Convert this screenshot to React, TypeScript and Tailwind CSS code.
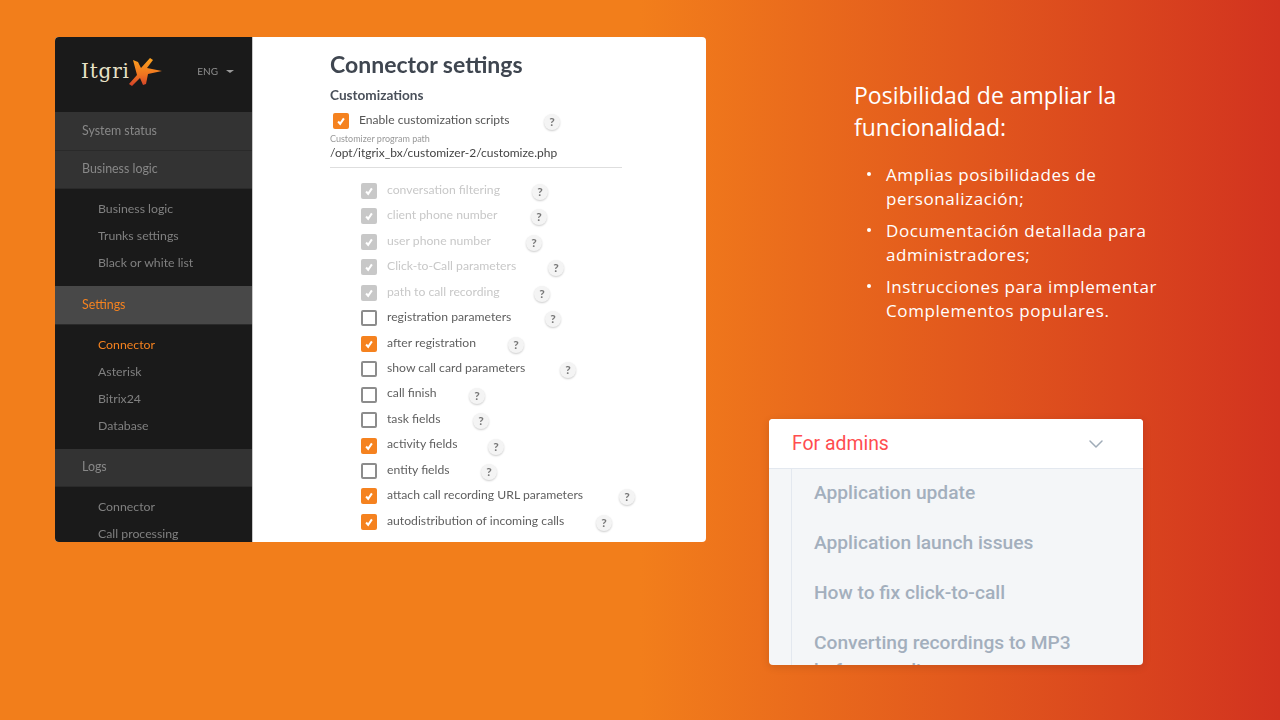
import { ChevronDown } from "lucide-react"

const topRows = [
    { label: "conversation filtering", state: "disabled", help: "w-[145px]" },
    { label: "client phone number", state: "disabled", help: "w-[144px]" },
    { label: "user phone number", state: "disabled", help: "w-[139px]" },
    { label: "Click-to-Call parameters", state: "disabled", help: "w-[161px]" },
    { label: "path to call recording", state: "disabled", help: "w-[147px]" },
    { label: "registration parameters", state: "off", help: "w-[158px]" },
    { label: "after registration", state: "on", help: "w-[121px]" },
    { label: "show call card parameters", state: "off", help: "w-[173px]" },
    { label: "call finish", state: "off", help: "w-[82px]" },
    { label: "task fields", state: "off", help: "w-[86px]" },
    { label: "activity fields", state: "on", help: "w-[101px]" },
    { label: "entity fields", state: "off", help: "w-[94px]" },
    { label: "attach call recording URL parameters", state: "on", help: "w-[232px]" },
    { label: "autodistribution of incoming calls", state: "on", help: "w-[209px]" },
]

const bullets = [
    ["Amplias posibilidades de", "personalización;"],
    ["Documentación detallada para", "administradores;"],
    ["Instrucciones para implementar", "Complementos populares."],
]

function Check({ state }: { state: string }) {
    if (state === "off") {
        return <span className="block w-4 h-4 rounded-[2px] border-2 border-[#8c8c8c] bg-white shrink-0" />
    }
    return (
        <span className={`flex items-center justify-center w-4 h-4 rounded-[2px] shrink-0 ${state === "on" ? "bg-[#f5821f]" : "bg-[#c8c8c8]"}`}>
            <svg width="12" height="12" viewBox="0 0 10 10" fill="none">
                <path d="M2.6 5.4 L4.3 7.4 L7.4 2.8" stroke="white" strokeWidth="1.7" />
            </svg>
        </span>
    )
}

function Help() {
    return (
        <span className="flex items-center justify-center w-4 h-4 rounded-full bg-[#f4f4f4] shadow-[0_1px_2px_rgba(0,0,0,0.2)] text-[12px] font-bold text-[#777] shrink-0 mt-[2px]">
            ?
        </span>
    )
}

function SideHead({ label, active }: { label: string; active?: boolean }) {
    return (
        <div className={`flex items-center h-[38.5px] pl-[27px] pt-[1px] text-[12.4px] border-b border-[#2a2a2a] ${active ? "bg-[#484848] text-[#f5821f]" : "bg-[#333333] text-[#888888]"}`}>
            {label}
        </div>
    )
}

function SideGroup({ items, active }: { items: string[]; active?: string }) {
    return (
        <div className="flex flex-col pt-[6.5px] pb-[9.5px]">
            {items.map((item) => (
                <div key={item} className={`flex items-center h-[27px] pl-[43px] pt-[1px] text-[12.3px] ${item === active ? "text-[#f5821f]" : "text-[#808080]"}`}>
                    {item}
                </div>
            ))}
        </div>
    )
}

function Logo() {
    return (
        <div className="h-[75px] flex items-center justify-between pl-[26px] pr-[18px] pb-[7px]">
            <div className="flex items-center">
                <span className="font-['DejaVu_Serif',serif] text-[20px] tracking-[0.8px] text-[#e8e2c8]">Itgri</span>
                <svg width="36" height="31" viewBox="0 0 36 31" className="-ml-[2px]">
                    <defs>
                        <linearGradient id="logoStar" x1="0" y1="0" x2="0" y2="1">
                            <stop offset="0" stopColor="#fba21f" />
                            <stop offset="0.6" stopColor="#ef7420" />
                            <stop offset="1" stopColor="#d2402a" />
                        </linearGradient>
                    </defs>
                    <path d="M5 4 L10 6 L13 12 L22 2 L25 4 L19 12 L34 15 L20 18 L18 28 L15 29 L12 22 L4 30 L1 28 L9 19 Z" fill="url(#logoStar)" />
                </svg>
            </div>
            <div className="flex items-center gap-2 text-[10px] text-[#8f8f8f]">
                ENG
                <span className="w-0 h-0 border-x-4 border-x-transparent border-t-[3px] border-t-[#9a9a9a]" />
            </div>
        </div>
    )
}

export default function App() {
    return (
        <div className="w-[1280px] h-[720px] overflow-hidden flex bg-[linear-gradient(90deg,#f27e1b_0%,#f27e1b_50%,#d2331f_100%)] font-['Lato',sans-serif]">
            <div className="w-[769px] pl-[55px] pt-[37px] shrink-0">
                <div className="flex w-[651px] h-[505px] rounded-[4px] overflow-hidden bg-white">
                    <aside className="w-[197px] bg-[#1a1a1a] shrink-0 blur-[0.3px]">
                        <Logo />
                        <SideHead label="System status" />
                        <SideHead label="Business logic" />
                        <SideGroup items={["Business logic", "Trunks settings", "Black or white list"]} />
                        <SideHead label="Settings" active />
                        <SideGroup items={["Connector", "Asterisk", "Bitrix24", "Database"]} active="Connector" />
                        <SideHead label="Logs" />
                        <SideGroup items={["Connector", "Call processing"]} />
                    </aside>
                    <main className="pl-[77px] pt-[12px] flex-1 text-[#555] border-l border-[#c8c8c8] blur-[0.3px]">
                        <h1 className="text-[23px] leading-[30px] font-bold text-[#3f4650]">Connector settings</h1>
                        <div className="mt-[7px] text-[13.6px] leading-[18px] font-bold text-[#4a505a]">Customizations</div>
                        <div className="flex items-center h-[20px] mt-[7px] pl-[3px] text-[12.1px]">
                            <Check state="on" />
                            <span className="ml-[10px] w-[185px] -mt-[2px]">Enable customization scripts</span>
                            <Help />
                        </div>
                        <div className="mt-[3px] text-[9px] leading-[10px] text-[#999]">Customizer program path</div>
                        <div className="text-[12px] leading-[17px] text-[#444]">/opt/itgrix_bx/customizer-2/customize.php</div>
                        <div className="w-[292px] mt-[6px] mb-[15px] border-t border-[#dedede]" />
                        <div className="flex flex-col gap-[9.46px] pl-[31px]">
                            {topRows.map((row) => (
                                <div key={row.label} className="flex items-center h-4 text-[12.2px]">
                                    <Check state={row.state} />
                                    <span className={`ml-[10px] -mt-[2px] whitespace-nowrap ${row.help} ${row.state === "disabled" ? "text-[#c8c8c8]" : "text-[#5f5f5f]"}`}>
                                        {row.label}
                                    </span>
                                    <Help />
                                </div>
                            ))}
                        </div>
                    </main>
                </div>
            </div>
            <div className="flex-1 flex flex-col">
                <div className="pl-[85px] pt-[79px] h-[419px] text-white font-['Open_Sans',sans-serif]">
                    <h2 className="text-[23px] leading-[32px]">Posibilidad de ampliar la<br />funcionalidad:</h2>
                    <ul className="mt-[20px] flex flex-col gap-[8px] text-[17px] leading-[24px] tracking-[0.6px]">
                        {bullets.map((lines) => (
                            <li key={lines[0]} className="flex">
                                <span className="w-[32px] pl-[13px] pt-[9px]">
                                    <span className="block w-[4px] h-[4px] rounded-full bg-white" />
                                </span>
                                <span>{lines[0]}<br />{lines[1]}</span>
                            </li>
                        ))}
                    </ul>
                </div>
                <div className="w-[374px] h-[246px] rounded-[4px] overflow-hidden bg-[#f4f6f8] shadow-[0_2px_8px_rgba(0,0,0,0.12)] font-['Roboto',sans-serif]">
                    <div className="flex items-center justify-between h-[50px] pl-[23px] pr-[35px] bg-white border-b border-[#e3e8ef]">
                        <span className="text-[19.4px] text-[#ff4d4f]">For admins</span>
                        <ChevronDown className="w-6 h-6 text-[#a0acb8]" strokeWidth={1.5} />
                    </div>
                    <div className="ml-[22px] pl-[22px] pr-[30px] pt-[10px] h-[196px] border-l border-[#e3e8ef] overflow-hidden text-[19.2px] leading-[28px] font-medium text-[#a3afbd] flex flex-col gap-[22px]">
                        <div>Application update</div>
                        <div>Application launch issues</div>
                        <div>How to fix click-to-call</div>
                        <div>Converting recordings to MP3 before sending</div>
                    </div>
                </div>
            </div>
        </div>
    )
}
